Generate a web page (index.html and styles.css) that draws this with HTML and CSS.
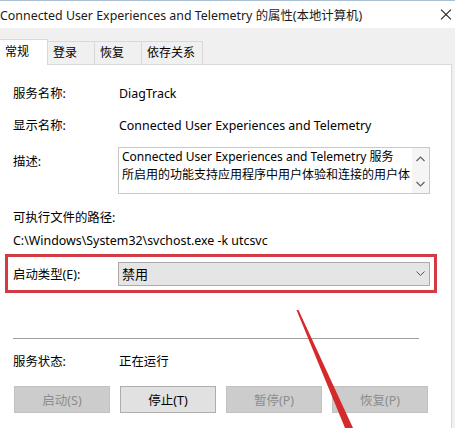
FILE: index.html
```html
<!DOCTYPE html>
<html lang="zh-CN">
<head>
  <meta charset="UTF-8">
  <title>Connected User Experiences and Telemetry 的属性(本地计算机)</title>
  <link rel="stylesheet" href="styles.css">
</head>
<body>
  <div class="window">
    <div class="titlebar">
      <span class="title">Connected User Experiences and Telemetry 的属性(本地计算机)</span>
      <span class="win-x"><i class="bar a"></i><i class="bar b"></i></span>
    </div>

    <div class="tabs">
      <div class="tab active">常规</div>
      <div class="tab">登录</div>
      <div class="tab">恢复</div>
      <div class="tab wide">依存关系</div>
    </div>

    <div class="panel">
      <div class="row first">
        <span class="label">服务名称:</span>
        <span class="value">DiagTrack</span>
      </div>
      <div class="row">
        <span class="label">显示名称:</span>
        <span class="value">Connected User Experiences and Telemetry</span>
      </div>
      <div class="row desc-row">
        <span class="label desc-label">描述:</span>
        <div class="desc-box">
          <div class="desc-text">Connected User Experiences and Telemetry 服务<br>所启用的功能支持应用程序中用户体验和连接的用户体</div>
          <div class="scrollbar">
            <svg width="9" height="6" viewBox="0 0 9 6"><path d="M0.5 5 L4.5 1 L8.5 5" stroke="#606060" stroke-width="1.2" fill="none"/></svg>
            <svg width="9" height="6" viewBox="0 0 9 6"><path d="M0.5 1 L4.5 5 L8.5 1" stroke="#606060" stroke-width="1.2" fill="none"/></svg>
          </div>
        </div>
      </div>

      <div class="path-label">可执行文件的路径:</div>
      <div class="path">C:\Windows\System32\svchost.exe -k utcsvc</div>

      <div class="highlight">
        <span class="label">启动类型(E):</span>
        <div class="select">
          <span>禁用</span>
          <svg width="9" height="5" viewBox="0 0 9 5"><path d="M0.5 0.5 L4.5 4.5 L8.5 0.5" stroke="#555" stroke-width="1" fill="none"/></svg>
        </div>
      </div>

      <div class="separator"></div>

      <div class="row status-row">
        <span class="label">服务状态:</span>
        <span class="value">正在运行</span>
      </div>

      <div class="buttons">
        <button class="btn" disabled>启动(S)</button>
        <button class="btn">停止(T)</button>
        <button class="btn" disabled>暂停(P)</button>
        <button class="btn" disabled>恢复(P)</button>
      </div>
    </div>

    <!-- red arrow drawn over the screenshot -->
    <svg class="arrow" width="455" height="428" viewBox="0 0 455 428">
      <polygon points="296.5,310 298.5,310 353,428 345,428" fill="#d42a2c"/>
    </svg>
  </div>
</body>
</html>
```

FILE: styles.css
```css
* {
  box-sizing: border-box;
}

body {
  margin: 0;
  padding: 0;
  font-family: "Noto Sans", "Noto Sans CJK SC", sans-serif;
  font-size: 12.4px;
  color: #000000;
}

.window {
  position: relative;
  width: 455px;
  height: 428px;
  overflow: hidden;
  background-color: #f0f0f0;
  border-top: 1px solid #aac0d2;
}

.titlebar {
  height: 27px;
  background-color: #ffffff;
  display: flex;
  align-items: center;
}

.title {
  white-space: nowrap;
  color: #1a1a1a;
}

/* close glyph made of two crossed bars */
.win-x {
  display: block;
  position: relative;
  width: 12px;
  height: 12px;
  margin-left: auto;
  margin-right: 3px;
  flex-shrink: 0;
}

.bar {
  display: block;
  position: absolute;
  left: -1px;
  top: 5px;
  width: 14px;
  height: 1px;
  background-color: #1a1a1a;
}

.bar.a {
  transform: rotate(45deg);
}

.bar.b {
  transform: rotate(-45deg);
}

.tabs {
  display: flex;
  align-items: flex-end;
  height: 36px;
}

.tab {
  width: 47px;
  height: 23px;
  line-height: 22px;
  padding-left: 5px;
  white-space: nowrap;
  background-color: #f0f0f0;
  border: 1px solid #d9d9d9;
  border-bottom: none;
  border-left: none;
  font-size: 12px;
}

.tab.wide {
  width: 61px;
}

.tab.active {
  width: 48px;
  height: 26px;
  line-height: 24px;
  background-color: #ffffff;
  position: relative;
  top: 1px;
}

.panel {
  width: 452px;
  height: 366px;
  background-color: #ffffff;
  border: 1px solid #d9d9d9;
  border-left: none;
  padding: 18px 0 0 0;
}

.row {
  display: flex;
  align-items: center;
  height: 20px;
  margin-bottom: 12px;
}

.label {
  width: 105px;
  margin-left: 13px;
  flex-shrink: 0;
}

.value {
  margin-left: 1px;
}

.desc-row {
  align-items: flex-start;
  height: 47px;
  margin-top: 3px;
  margin-bottom: 0;
}

.desc-label {
  padding-top: 5px;
}

.desc-box {
  width: 312px;
  height: 47px;
  border: 1px solid #c9c9c9;
  display: flex;
}

.desc-text {
  flex: 1;
  min-width: 0;
  padding: 0 0 0 3px;
  font-size: 12px;
  line-height: 18px;
  white-space: nowrap;
  overflow: hidden;
}

.scrollbar {
  flex: 0 0 17px;
  background-color: #f5f5f5;
  display: flex;
  flex-direction: column;
  justify-content: space-between;
  align-items: center;
  padding: 8px 0 6px 0;
}

.path-label {
  margin: 14px 0 0 13px;
  height: 20px;
  line-height: 20px;
}

.path {
  margin: 3px 0 0 13px;
  height: 20px;
  line-height: 20px;
}

.highlight {
  display: flex;
  align-items: center;
  width: 432px;
  height: 39px;
  margin: 3px 0 0 5px;
  border: 3px solid #d23a44;
}

.highlight .label {
  margin-left: 5px;
}

.select {
  width: 312px;
  height: 24px;
  background-color: #e5e5e5;
  border: 1px solid #acacac;
  display: flex;
  align-items: center;
  justify-content: space-between;
  padding: 0 4px 0 3px;
  font-size: 13px;
}

.separator {
  height: 1px;
  width: 406px;
  margin: 45px 0 0 13px;
  background-color: #a0a0a0;
}

.status-row {
  margin-top: 12px;
  margin-bottom: 0;
}

.buttons {
  display: grid;
  grid-template-columns: repeat(4, 96px);
  column-gap: 10px;
  margin: 15px 0 0 14px;
}

.btn {
  height: 27px;
  font-family: inherit;
  font-size: 12.5px;
  color: #000000;
  background-color: #e1e1e1;
  border: 1px solid #adadad;
  padding: 0;
}

.btn:disabled {
  color: #8d8d8d;
  background-color: #cccccc;
  border-color: #c2c2c2;
}

.arrow {
  position: absolute;
  left: 0;
  top: -1px;
  pointer-events: none;
}
```
